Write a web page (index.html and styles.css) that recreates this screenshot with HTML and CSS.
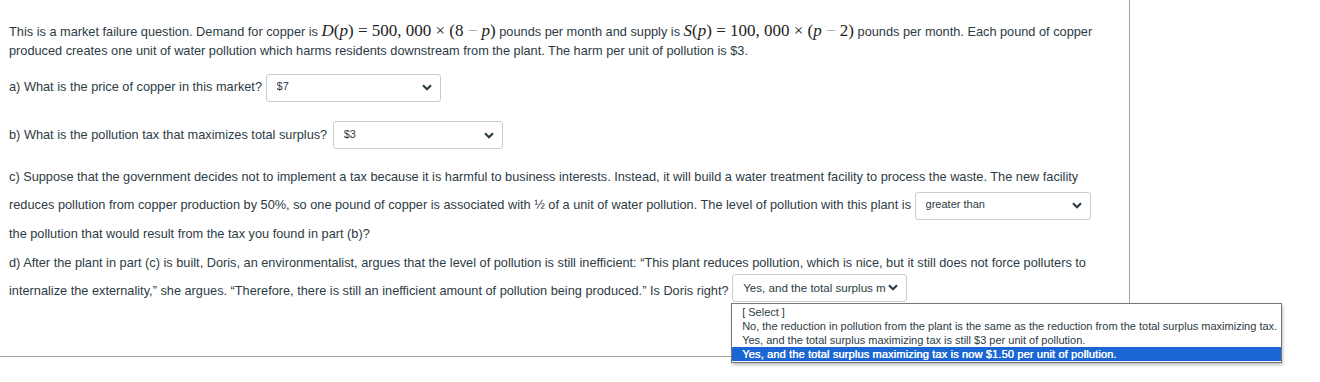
FILE: index.html
```html
<!DOCTYPE html>
<html>
<head>
	<title>Market Failure Question</title>
	<link rel="stylesheet" href="styles.css">
</head>
<body>
<div id="container">

	<p class="intro">This is a market failure question. Demand for copper is <span class="math"><i>D</i>(<i>p</i>) = 500, 000 × (8 <span class="minus">−</span> <i>p</i>)</span> pounds per month and supply is <span class="math"><i>S</i>(<i>p</i>) = 100, 000 × (<i>p</i> <span class="minus">−</span> 2)</span> pounds per month. Each pound of copper produced creates one unit of water pollution which harms residents downstream from the plant. The harm per unit of pollution is $3.</p>

	<p class="part part-a">a) What is the price of copper in this market? <span class="dropdown w175"><span class="value">$7</span><svg class="chev" width="10" height="7" viewBox="0 0 10 7"><path d="M1 1.2 L5 5.2 L9 1.2" fill="none" stroke="#2d3b45" stroke-width="2.2"/></svg></span></p>

	<p class="part part-b">b) What is the pollution tax that maximizes total surplus? <span class="dropdown w168"><span class="value">$3</span><svg class="chev" width="10" height="7" viewBox="0 0 10 7"><path d="M1 1.2 L5 5.2 L9 1.2" fill="none" stroke="#2d3b45" stroke-width="2.2"/></svg></span></p>

	<p class="part part-c">c) Suppose that the government decides not to implement a tax because it is harmful to business interests. Instead, it will build a water treatment facility to process the waste. The new facility reduces pollution from copper production by 50%, so one pound of copper is associated with ½ of a unit of water pollution. The level of pollution with this plant is <span class="dropdown w176"><span class="value">greater than</span><svg class="chev" width="10" height="7" viewBox="0 0 10 7"><path d="M1 1.2 L5 5.2 L9 1.2" fill="none" stroke="#2d3b45" stroke-width="2.2"/></svg></span> the pollution that would result from the tax you found in part (b)?</p>

	<p class="part part-d">d) After the plant in part (c) is built, Doris, an environmentalist, argues that the level of pollution is still inefficient: “This plant reduces pollution, which is nice, but it still does not force polluters to internalize the externality,” she argues. “Therefore, there is still an inefficient amount of pollution being produced.” Is Doris right? <span class="dropdown w175 open"><span class="value big">Yes, and the total surplus maximizing tax is now $1.50 per unit of pollution.</span><svg class="chev" width="10" height="7" viewBox="0 0 10 7"><path d="M1 1.2 L5 5.2 L9 1.2" fill="none" stroke="#2d3b45" stroke-width="2.2"/></svg>
		<span class="options">
			<span class="option">[ Select ]</span>
			<span class="option">No, the reduction in pollution from the plant is the same as the reduction from the total surplus maximizing tax.</span>
			<span class="option">Yes, and the total surplus maximizing tax is still $3 per unit of pollution.</span>
			<span class="option selected">Yes, and the total surplus maximizing tax is now $1.50 per unit of pollution.</span>
		</span>
	</span></p>

</div>
</body>
</html>
```

FILE: styles.css
```css
html, body {
	height: 382px;
}
body {
	margin: 0;
	font-family: "Liberation Sans", Arial, sans-serif;
	color: #2d3b45;
	background: #fff;
}

#container {
	box-sizing: border-box;
	width: 1130px;
	height: 357px;
	padding: 22px 30px 0 9px;
	border-right: 1px solid #a5a5a5;
	border-bottom: 1px solid #a5a5a5;
	font-size: 12.75px;
}

p {
	margin: 0;
}

.intro {
	line-height: 19px;
}

.math {
	font-family: "Liberation Serif", "Times New Roman", serif;
	font-size: 17px;
	line-height: 1;
	color: #222;
}
.math i {
	font-style: italic;
}
.minus {
	color: #999;
}

.part {
	line-height: 28px;
}
.part-a {
	margin-top: 13px;
}
.part-b {
	margin-top: 19px;
}
.part-c {
	margin-top: 14px;
}
.part-d {
	margin-top: 1px;
}

.dropdown {
	position: relative;
	display: inline-flex;
	align-items: center;
	justify-content: space-between;
	box-sizing: border-box;
	height: 28px;
	padding: 0 8px 0 10px;
	border: 1px solid #c7cdd1;
	border-radius: 3px;
	background: #fff;
	vertical-align: middle;
	font-size: 11px;
	line-height: 14px;
	color: #2d3b45;
}
.part-b .dropdown {
	margin-left: 2px;
}
.part-d .dropdown {
	margin-top: -4px;
	margin-bottom: 4px;
}
.w175 { width: 175px; }
.w168 { width: 170px; }
.w176 { width: 176px; }

.dropdown .value {
	white-space: nowrap;
	overflow: hidden;
	margin-top: -3px;
	flex: 1;
	min-width: 0;
}
.dropdown .value.big {
	font-size: 11.6px;
	margin-top: 0;
	margin-right: 2px;
}
.chev {
	flex: none;
}

.options {
	position: absolute;
	left: -2px;
	top: 28px;
	width: 551px;
	box-sizing: border-box;
	padding: 1px 0;
	border: 1px solid #767676;
	background: #fff;
	box-shadow: 1px 2px 3px rgba(0,0,0,0.25);
	overflow: hidden;
	z-index: 5;
}
.option {
	display: block;
	height: 14px;
	line-height: 14px;
	padding-left: 10px;
	font-size: 11px;
	white-space: nowrap;
	color: #2d3b45;
}
.option.selected {
	background: #1a66d3;
	color: #fff;
	text-shadow: 0.4px 0 0 #fff;
	letter-spacing: 0.15px;
}
```
